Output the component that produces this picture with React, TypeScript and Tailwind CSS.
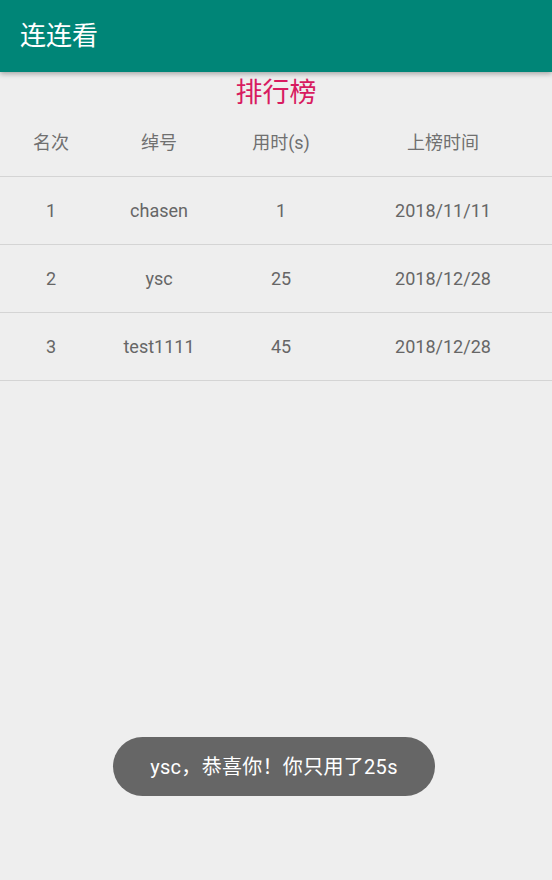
const rows = [
  { rank: "1", name: "chasen", time: "1", date: "2018/11/11" },
  { rank: "2", name: "ysc", time: "25", date: "2018/12/28" },
  { rank: "3", name: "test1111", time: "45", date: "2018/12/28" },
]

const font = { fontFamily: 'Roboto, "Noto Sans CJK SC", sans-serif' }

function Row({ cells, header }: { cells: string[]; header?: boolean }) {
  return (
    <div
      className={
        "grid h-[68px] grid-cols-[102px_114px_130px_194px] items-center border-b border-[#d4d4d4] text-[18px] " +
        (header ? "text-[#707070]" : "text-[#666666]")
      }
    >
      {cells.map((c, i) => (
        <div key={i} className="text-center">
          {c}
        </div>
      ))}
    </div>
  )
}

export default function App() {
  return (
    <div className="relative h-[880px] w-[552px] overflow-hidden bg-[#eeeeee]" style={font}>
      <div className="relative z-10 flex h-[72px] items-center bg-[#008577] pl-5 text-[26px] text-white shadow-[0_2px_5px_rgba(0,0,0,0.3)]">
        连连看
      </div>
      <div className="pt-[5px] text-center text-[27px] leading-[32px] text-[#d81b60]">排行榜</div>
      <Row header cells={["名次", "绰号", "用时(s)", "上榜时间"]} />
      {rows.map((r) => (
        <Row key={r.rank} cells={[r.rank, r.name, r.time, r.date]} />
      ))}
      <div className="absolute left-[113px] top-[737px] flex h-[59px] w-[322px] items-center justify-center rounded-full bg-[#666666] text-[20px] tracking-[0.3px] text-white">
        ysc，恭喜你！你只用了25s
      </div>
    </div>
  )
}
